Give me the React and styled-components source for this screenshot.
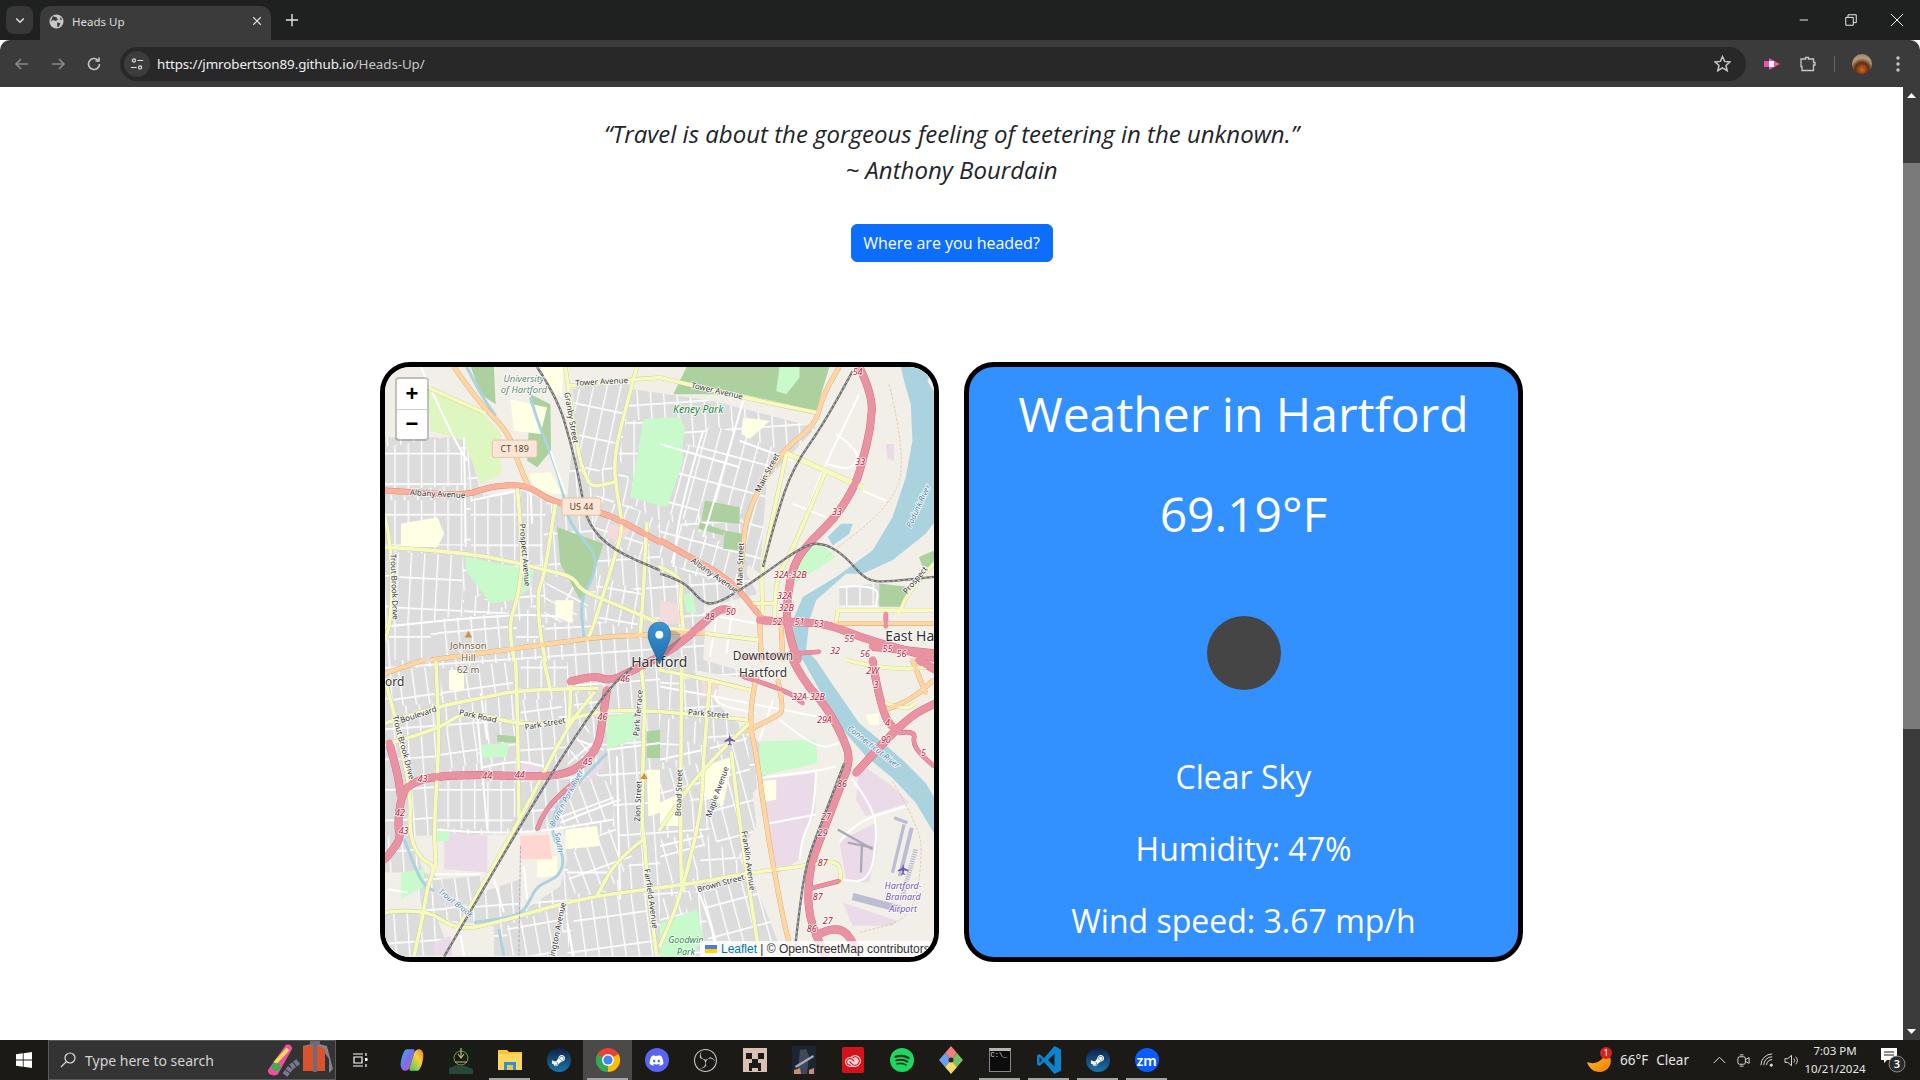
import React from "react"
import styled, { createGlobalStyle } from "styled-components"
import { FaDiscord, FaSteamSymbol } from "react-icons/fa"
import { SiObsstudio, SiAdobecreativecloud } from "react-icons/si"

const GlobalStyle = createGlobalStyle`
  html, body {
    margin: 0;
    height: 100%;
    overflow: hidden;
    background: #fff;
  }
  * { box-sizing: border-box; }
`

const UI_FONT = `"Noto Sans", "Open Sans", sans-serif`

/* ---------- browser chrome ---------- */

const Screen = styled.div`
  width: 1920px;
  height: 1080px;
  display: flex;
  flex-direction: column;
  font-family: "Open Sans", sans-serif;
`
const TabStrip = styled.div`
  height: 40px;
  background: #1f2020;
  display: flex;
  align-items: flex-end;
  padding-left: 6px;
  color: #e3e3e3;
  font-family: ${UI_FONT};
`
const TabSearch = styled.div`
  width: 27px;
  height: 28px;
  margin: 0 7px 6px 0;
  border-radius: 8px;
  background: #383838;
  display: flex;
  align-items: center;
  justify-content: center;
`
const Tab = styled.div`
  width: 231px;
  height: 34px;
  background: #3b3b3b;
  border-radius: 10px 10px 0 0;
  display: flex;
  align-items: center;
  padding: 0 8px 4px 9px;
  gap: 8px;
`
const TabTitle = styled.span`
  flex: 1;
  font-size: 11.5px;
  color: #dedede;
`
const NewTab = styled.div`
  width: 28px;
  height: 28px;
  margin: 0 0 6px 7px;
  display: flex;
  align-items: center;
  justify-content: center;
`
const WindowControls = styled.div`
  margin-left: auto;
  display: flex;
  align-self: stretch;
`
const WindowButton = styled.div`
  width: 46px;
  display: flex;
  align-items: center;
  justify-content: center;
`
const Toolbar = styled.div`
  height: 47px;
  background: #3b3b3b;
  display: flex;
  align-items: center;
  padding-left: 4px;
  border-radius: 10px 10px 0 0;
`
const NavButton = styled.div`
  width: 36px;
  height: 34px;
  display: flex;
  align-items: center;
  justify-content: center;
`
const Omnibox = styled.div`
  width: 1626px;
  height: 34px;
  margin-left: 8px;
  border-radius: 17px;
  background: #282828;
  display: flex;
  align-items: center;
  padding: 0 15px 0 4px;
`
const SiteInfo = styled.div`
  width: 26px;
  height: 26px;
  border-radius: 50%;
  background: #3c3c3c;
  display: flex;
  align-items: center;
  justify-content: center;
  margin-right: 7px;
`
const Url = styled.div`
  flex: 1;
  font-family: ${UI_FONT};
  font-size: 13.4px;
  letter-spacing: -0.1px;
  color: #c7c7c7;
  span { color: #f0f0f0; }
`
const ToolIcons = styled.div`
  display: flex;
  align-items: center;
  flex: 1;
  padding-left: 8px;
`
const ToolIcon = styled.div`
  width: ${p => p.$w || 36}px;
  display: flex;
  justify-content: center;
  align-items: center;
`
const ToolSep = styled.div`
  width: 1px;
  height: 16px;
  background: #666;
  margin: 0 9px 0 8px;
`
const Avatar = styled.div`
  width: 20px;
  height: 20px;
  border-radius: 50%;
  background: radial-gradient(circle at 50% 78%, #d8661c 0, #5e2d12 38%, #b79a7b 62%, #8c7a66 100%);
`

/* ---------- page ---------- */

const Viewport = styled.div`
  height: 953px;
  display: flex;
`
const Page = styled.main`
  flex: 1;
  background: #fff;
  display: flex;
  flex-direction: column;
  align-items: center;
  padding-top: 29px;
`
const Quote = styled.p`
  margin: 0;
  font-size: 24px;
  line-height: 36px;
  font-style: italic;
  font-weight: 400;
  color: #212529;
  text-align: center;
`
const HeadButton = styled.button`
  margin-top: 36px;
  width: 202px;
  height: 38px;
  background: #0d6efd;
  color: #fff;
  border: 1px solid #0d6efd;
  border-radius: 6px;
  font-family: "Open Sans", sans-serif;
  font-size: 16px;
`
const Cards = styled.section`
  margin-top: 100px;
  display: flex;
  gap: 25px;
`
const Card = styled.div`
  width: 559px;
  height: 600px;
  border: 5px solid #000;
  border-radius: 30px;
  overflow: hidden;
  position: relative;
`
const WeatherCard = styled(Card)`
  background: #3391ff;
  color: #fff;
  text-align: center;
  display: flex;
  flex-direction: column;
  align-items: center;
  padding-top: 11px;
`
const WeatherTitle = styled.div`
  font-size: 48px;
  line-height: 72px;
`
const WeatherTemp = styled.div`
  font-size: 48px;
  line-height: 72px;
  margin-top: 28px;
`
const WeatherIcon = styled.div`
  width: 74px;
  height: 74px;
  border-radius: 50%;
  background: #454545;
  margin-top: 66px;
`
const WeatherLine = styled.div`
  font-size: 32px;
  line-height: 48px;
  margin-top: ${p => p.$top}px;
`
const MapCanvas = styled.svg`
  display: block;
  width: 100%;
  height: 100%;
`
const MapLabel = styled.text`
  font-family: "Noto Sans", sans-serif;
  font-size: ${p => p.$size || 24}px;
  font-style: ${p => (p.$italic ? "italic" : "normal")};
  fill: ${p => p.$color || "#333"};
  stroke: ${p => (p.$nohalo ? "none" : "rgba(255,255,255,0.85)")};
  stroke-width: 5px;
  paint-order: stroke;
  text-anchor: ${p => p.$anchor || "middle"};
`
const ZoomControl = styled.div`
  position: absolute;
  left: 10px;
  top: 10px;
  width: 34px;
  height: 64px;
  border: 2px solid rgba(0, 0, 0, 0.2);
  border-radius: 4px;
  background: #fff;
  background-clip: padding-box;
  display: flex;
  flex-direction: column;
`
const ZoomButton = styled.div`
  flex: 1;
  display: flex;
  align-items: center;
  justify-content: center;
  font-family: "Liberation Sans", Arial, sans-serif;
  font-weight: 700;
  font-size: 22px;
  color: #000;
  & + & { border-top: 1px solid #ccc; }
`
const Attribution = styled.div`
  position: absolute;
  right: 0;
  bottom: 0;
  height: 16px;
  width: 234px;
  padding-left: 5px;
  background: rgba(255, 255, 255, 0.8);
  font-family: "Liberation Sans", Arial, sans-serif;
  font-size: 12px;
  line-height: 16px;
  color: #333;
  white-space: nowrap;
  display: flex;
  align-items: center;
  gap: 4px;
  a { color: #0078a8; text-decoration: none; }
`
const Scrollbar = styled.div`
  width: 17px;
  background: #3b3b3b;
  display: flex;
  flex-direction: column;
  align-items: center;
  justify-content: space-between;
  position: relative;
`
const ScrollArrow = styled.div`
  width: 17px;
  height: 17px;
  display: flex;
  align-items: center;
  justify-content: center;
`
const ScrollThumb = styled.div`
  position: absolute;
  top: 76px;
  left: 0;
  width: 17px;
  height: 566px;
  background: #7a7a7a;
`

/* ---------- taskbar ---------- */

const Taskbar = styled.footer`
  height: 40px;
  background: #1c1a17;
  display: flex;
  align-items: center;
  color: #fff;
  font-family: ${UI_FONT};
`
const StartButton = styled.div`
  width: 48px;
  display: flex;
  justify-content: center;
`
const SearchBox = styled.div`
  width: 288px;
  height: 40px;
  background: #333;
  border: 1px solid #5a5a5a;
  display: flex;
  align-items: center;
  padding-left: 11px;
  gap: 9px;
  font-size: 14px;
  color: #d4d4d4;
  margin-right: -1px;
`
const SearchText = styled.span`
  flex: 1;
  white-space: nowrap;
`
const TaskIcon = styled.div`
  width: 49px;
  height: 40px;
  display: flex;
  align-items: center;
  justify-content: center;
  position: relative;
  margin-right: ${p => p.$gap || 0}px;
  background: ${p => (p.$active ? "#4b4a48" : "transparent")};
  &::after {
    content: "";
    display: ${p => (p.$running ? "block" : "none")};
    position: absolute;
    left: 4px;
    right: 4px;
    bottom: 0;
    height: 2px;
    background: #a5a5a5;
  }
`
const RoundBadge = styled.div`
  width: 24px;
  height: 24px;
  border-radius: 50%;
  background: ${p => p.$bg};
  color: #fff;
  display: flex;
  align-items: center;
  justify-content: center;
  font-size: ${p => p.$font || 14}px;
  font-weight: 600;
`
const Tray = styled.div`
  margin-left: auto;
  display: flex;
  align-items: center;
  height: 40px;
`
const WeatherTray = styled.div`
  display: flex;
  align-items: center;
  font-size: 13.5px;
  color: #e6e6e6;
  margin-right: 18px;
  span { margin-left: 8px; }
  span:first-of-type { margin-left: 4px; }
`
const TrayIcon = styled.div`
  width: 24px;
  display: flex;
  justify-content: center;
`
const Clock = styled.div`
  width: 66px;
  margin: 0 6px 0 -1px;
  text-align: center;
  font-size: 11.5px;
  line-height: 18px;
  color: #e6e6e6;
`
const Notice = styled.div`
  width: 46px;
  padding-right: 8px;
  display: flex;
  justify-content: center;
`

/* ---------- map data: coordinates are 3x page px, origin at (380,360) ---------- */

const q2 = pts => pts.map(([x, y]) => [x + 840, y])
const q3 = pts => pts.map(([x, y]) => [x, y + 900])
const q4 = pts => pts.map(([x, y]) => [x + 840, y + 900])

const smooth = pts => {
  let d = `M${pts[0][0]} ${pts[0][1]}`
  for (let i = 1; i < pts.length - 1; i++) {
    const mx = (pts[i][0] + pts[i + 1][0]) / 2
    const my = (pts[i][1] + pts[i + 1][1]) / 2
    d += ` Q${pts[i][0]} ${pts[i][1]} ${mx} ${my}`
  }
  const last = pts[pts.length - 1]
  return d + ` L${last[0]} ${last[1]}`
}
const poly = pts => pts.map(p => p.join(",")).join(" ")

// grey street grid under nearly everything west of the river
const blanket = [
  [-4, [[12, 230], [260, 230], [300, 400], [560, 430], [590, 60], [1000, 120], [1310, 200], [1160, 360], [1100, 640], [1180, 780], [1130, 1000], [1160, 1250], [1040, 1400], [1200, 1790], [12, 1790]]],
]

// open ground and downtown, cut out of the blanket
const beige = [
  q2([[140, 740], [300, 700], [420, 760], [340, 960], [130, 900]]),
  q4([[100, 30], [340, 70], [440, 170], [300, 250], [170, 130]]),
  q3([[30, 530], [420, 525], [420, 660], [300, 700], [130, 640], [90, 530]]),
  q3([[12, 640], [90, 640], [130, 760], [12, 760]]),
  q3([[420, 520], [550, 500], [560, 600], [540, 680], [420, 760]]),
  q3([[170, 780], [340, 800], [340, 890], [210, 890]]),
  q4([[305, 620], [420, 600], [410, 893], [370, 893]]),
]

const blocks = [
  [0, [[12, 258], [215, 228], [255, 290], [262, 372], [12, 392]]],
  [0, [[12, 420], [250, 418], [250, 555], [12, 555]]],
  [3, [[40, 575], [245, 585], [245, 770], [25, 800]]],
  [3, [[250, 690], [385, 750], [385, 770], [250, 775]]],
  [0, [[270, 425], [410, 395], [415, 600], [270, 570]]],
  [0, [[420, 390], [500, 420], [480, 615], [420, 605]]],
  [12, [[575, 85], [765, 65], [705, 290], [615, 370]]],
  [18, [[650, 390], [840, 480], [790, 600], [640, 510]]],
  [-62, [[500, 640], [590, 670], [630, 730], [560, 790], [490, 770]]],
  [10, [[650, 640], [790, 700], [770, 810], [640, 780]]],
  [0, [[790, 175], [740, 180], [705, 330], [740, 420], [780, 430]]],
  [0, [[40, 790], [150, 790], [150, 900], [40, 900]]],
  [-5, [[170, 775], [385, 760], [385, 870], [170, 890]]],
  [0, [[410, 790], [470, 710], [480, 830], [405, 860]]],
  [-3, [[490, 790], [640, 780], [640, 830], [500, 850]]],
  [12, [[720, 300], [790, 440], [700, 430]]],
  ...[
    [15, [[80, 250], [310, 320], [270, 470], [40, 400]]],
    [15, [[150, 190], [370, 270], [310, 360], [110, 260]]],
    [15, [[250, 370], [320, 380], [300, 640], [250, 600]]],
    [15, [[0, 340], [130, 400], [110, 490], [0, 450]]],
    [15, [[0, 470], [110, 510], [90, 640], [0, 590]]],
    [15, [[110, 510], [240, 570], [240, 680], [80, 640]]],
    [0, [[540, 680], [660, 670], [660, 740], [540, 740]]],
  ].map(([a, p]) => [a, q2(p)]),
  ...[
    [-8, [[35, 30], [160, 20], [160, 130], [35, 140]]],
    [-8, [[180, 25], [390, 5], [400, 95], [180, 130]]],
    [0, [[420, 0], [560, 0], [570, 85], [420, 100]]],
    [-8, [[175, 215], [285, 190], [295, 310], [175, 335]]],
    [-8, [[300, 200], [400, 190], [410, 295], [300, 320]]],
    [-8, [[420, 120], [550, 120], [530, 190], [420, 180]]],
    [-8, [[580, 100], [660, 90], [650, 140], [580, 170]]],
    [-40, [[570, 250], [620, 190], [640, 260], [560, 330]]],
    [0, [[175, 365], [300, 360], [320, 510], [160, 505]]],
    [0, [[305, 370], [400, 360], [410, 460], [370, 525], [320, 520]]],
    [-20, [[540, 430], [640, 340], [700, 380], [700, 480], [530, 500]]],
    [-4, [[710, 290], [770, 280], [790, 500], [700, 490]]],
    [-20, [[560, 590], [700, 500], [760, 600], [690, 690], [640, 710], [570, 700]]],
    [-10, [[380, 800], [540, 740], [550, 820], [500, 890], [380, 890]]],
    [-8, [[590, 720], [790, 700], [830, 890], [560, 890]]],
    [-4, [[800, 350], [840, 350], [840, 450], [800, 450]]],
    [-4, [[800, 470], [840, 470], [840, 630], [810, 640]]],
    [-8, [[180, 660], [300, 650], [300, 720], [200, 760]]],
    [0, [[12, 270], [35, 270], [40, 480], [12, 560]]],
  ].map(([a, p]) => [a, q3(p)]),
  ...[
    [3, [[0, 30], [60, 40], [60, 150], [0, 150]]],
    [3, [[0, 180], [60, 175], [60, 300], [0, 310]]],
    [3, [[70, 175], [130, 190], [130, 260], [70, 240]]],
    [-15, [[150, 250], [260, 220], [290, 500], [230, 600], [150, 530]]],
    [-15, [[0, 540], [150, 510], [110, 640], [0, 690]]],
    [-15, [[130, 700], [280, 660], [360, 860], [150, 890]]],
    [-15, [[0, 720], [110, 690], [60, 790], [0, 830]]],
    [-15, [[0, 330], [125, 310], [125, 400], [0, 480]]],
  ].map(([a, p]) => [a, q4(p)]),
]

const fills = [
  ["#def6c0", [[140, 90], [300, 150], [362, 220], [362, 340], [300, 370], [250, 240], [150, 210]]],
  ["#add19e", [[450, 100], [510, 130], [512, 270], [470, 320], [440, 300]]],
  ["#add19e", [[530, 500], [670, 550], [640, 640], [600, 720], [540, 610]]],
  ["#add19e", [[270, 18], [340, 18], [345, 130], [300, 100]]],
  ["#c8facc", [[790, 175], [905, 170], [910, 300], [860, 440], [750, 410]]],
  ["#c8facc", [[255, 590], [460, 630], [450, 680], [400, 720], [330, 730], [255, 630]]],
  ["#ffffe5", [[60, 490], [170, 470], [190, 520], [170, 560], [60, 560]]],
  ["#ffffe5", [[390, 115], [500, 140], [480, 220], [400, 210]]],
  ["#ffffe5", [[445, 340], [510, 335], [545, 400], [470, 400]]],
  ["#ffffe5", [[480, 18], [550, 18], [545, 110], [510, 90]]],
  ["#ffffe5", [[525, 720], [580, 720], [575, 790], [525, 770]]],
  ["#f5dcdc", [[690, 490], [750, 510], [720, 545], [680, 530]]],
  ...[
    ["#add19e", [[80, 18], [510, 18], [470, 150], [250, 100], [40, 100]]],
    ["#c8facc", [[360, 18], [420, 18], [420, 50], [380, 100], [350, 90]]],
    ["#add19e", [[135, 420], [240, 440], [240, 490], [125, 480]]],
    ["#add19e", [[120, 485], [195, 510], [190, 525], [115, 505]]],
    ["#add19e", [[195, 510], [250, 520], [240, 570], [190, 565]]],
    ["#add19e", [[660, 670], [750, 680], [730, 740], [660, 740]]],
    ["#add19e", [[780, 590], [825, 570], [825, 620], [790, 620]]],
    ["#c8facc", [[0, 170], [60, 170], [75, 200], [60, 300], [15, 340], [0, 340]]],
    ["#c8facc", [[430, 560], [490, 555], [530, 590], [420, 660], [395, 680]]],
    ["#ebdbe8", [[680, 250], [705, 250], [705, 300], [685, 295]]],
    ["#f5dcdc", [[0, 720], [50, 730], [70, 790], [0, 790]]],
    ["#ffffe5", [[250, 170], [330, 180], [270, 235], [245, 220]]],
    ["#c8facc", [[70, 700], [100, 705], [110, 760], [80, 755]]],
  ].map(([c, p]) => [c, q2(p)]),
  ...[
    ["#c8facc", [[300, 255], [385, 250], [380, 290], [300, 295]]],
    ["#c8facc", [[60, 640], [130, 630], [130, 680], [60, 720]]],
    ["#c8facc", [[680, 170], [760, 160], [780, 235], [680, 270]]],
    ["#add19e", [[350, 225], [410, 230], [410, 250], [350, 245]]],
    ["#ebdbe8", [[190, 520], [320, 530], [320, 640], [190, 630]]],
    ["#ebdbe8", [[160, 850], [210, 830], [215, 890], [160, 890]]],
    ["#ffffe5", [[555, 510], [650, 500], [660, 560], [555, 570]]],
    ["#ffffe5", [[470, 590], [530, 590], [530, 650], [470, 655]]],
    ["#ffffe5", [[800, 330], [840, 330], [840, 460], [805, 470]]],
    ["#ffffe5", [[205, 30], [250, 30], [250, 90], [205, 90]]],
    ["#ffd6d1", [[420, 530], [505, 525], [515, 600], [420, 600]]],
    ["#add19e", [[800, 215], [840, 210], [840, 295], [800, 295]]],
    ["#c8facc", [[155, 515], [205, 515], [205, 545], [155, 545]]],
    ["#ebdbe8", [[620, 340], [670, 290], [670, 320], [630, 360]]],
    ["#ebdbe8", [[400, 300], [480, 320], [470, 350], [400, 340]]],
  ].map(([c, p]) => [c, q3(p)]),
  ...[
    ["#c8facc", [[300, 245], [470, 240], [475, 310], [300, 350]]],
    ["#c8facc", [[0, 795], [110, 750], [135, 850], [60, 893], [0, 893]]],
    ["#ebdbe8", [[305, 360], [470, 340], [468, 460], [430, 540], [420, 600], [360, 640], [340, 640]]],
    ["#ebdbe8", [[540, 545], [650, 490], [655, 560], [630, 670], [560, 665]]],
    ["#ebdbe8", [[600, 310], [700, 380], [750, 430], [620, 470], [590, 420]]],
    ["#ebdbe8", [[550, 730], [715, 785], [700, 800], [580, 800]]],
    ["#ffffe5", [[130, 320], [220, 290], [190, 440], [135, 410]]],
    ["#ffffe5", [[300, 365], [350, 360], [350, 420], [305, 430]]],
    ["#ffffe5", [[0, 430], [60, 400], [60, 500], [0, 500]]],
    ["#ffffe5", [[620, 165], [660, 160], [660, 195], [630, 195]]],
    ["#f5dcdc", [[130, 60], [180, 70], [170, 120], [120, 110]]],
  ].map(([c, p]) => [c, q4(p)]),
]

const river = [
  ...q2([[725, 18], [735, 60], [755, 130], [760, 240], [740, 350], [700, 470], [640, 570], [530, 650], [430, 710], [400, 780], [405, 900]]),
  ...q4([[430, 0], [480, 90], [550, 210], [620, 290], [700, 355], [770, 430], [830, 530], [830, 420], [800, 370], [730, 300], [660, 240], [600, 190], [510, 60], [470, 0]]),
  ...q2([[440, 870], [450, 780], [470, 720], [560, 640], [610, 640], [700, 600], [800, 520], [830, 480], [830, 100], [805, 60], [830, 18]]),
]

const streams = [
  [[258, 18], [300, 100], [345, 165]],
  [[450, 110], [470, 180], [520, 300], [550, 400], [565, 490], [650, 580], [640, 650], [600, 720], [610, 830]],
  q3([[680, 280], [620, 345], [530, 430], [510, 520], [552, 590], [540, 650], [470, 680], [450, 720], [420, 770], [280, 790]]),
  q3([[355, 810], [370, 890]]),
  q3([[70, 540], [100, 620], [130, 680], [160, 695]]),
]

const ROAD = {
  trunk: ["#e0806a", "#f9b29c", 16],
  primary: ["#d9a366", "#fcd6a4", 13],
  tertiary: ["#c9c98e", "#f7fabf", 11],
  wide: ["#c9c98e", "#f7fabf", 15],
  motor: ["#d6607c", "#e892a2", 22],
  ramp: ["#d6607c", "#e892a2", 12],
}

const roads = [
  ["tertiary", [[130, 75], [310, 155]]],
  ["tertiary", [[570, 75], [760, 55], [840, 50]]],
  ["tertiary", q2([[0, 50], [250, 110], [470, 155]])],
  ["tertiary", [[555, 18], [590, 270], [620, 360], [640, 380], [700, 365]]],
  ["tertiary", [[770, 18], [740, 130], [700, 290], [710, 400], [730, 500], [700, 600], [640, 800], [620, 840]]],
  ["tertiary", [[800, 490], [790, 700], [780, 830]]],
  ["tertiary", [[12, 560], [250, 575], [420, 610], [500, 630], [580, 650], [600, 690], [700, 730], [840, 790]]],
  ["tertiary", [[525, 430], [510, 530], [490, 650], [470, 700], [480, 830], [495, 900]]],
  ["tertiary", q3([[490, 0], [510, 90]])],
  ["tertiary", [[410, 380], [430, 590], [410, 720], [385, 790], [400, 900]]],
  ["tertiary", q3([[405, 0], [410, 100], [415, 470]])],
  ["tertiary", [[12, 470], [35, 570], [30, 780], [12, 840]]],
  ["tertiary", q3([[12, 60], [40, 160], [60, 260], [90, 400], [85, 530], [120, 600], [165, 620], [140, 680], [130, 750], [100, 890]])],
  ["tertiary", q3([[165, 0], [175, 200], [170, 340], [160, 500], [165, 620]])],
  ["tertiary", q3([[12, 190], [170, 140], [300, 115], [420, 90], [650, 85]])],
  ["tertiary", q3([[12, 255], [170, 210], [240, 160], [310, 165], [415, 195], [540, 190], [660, 150], [840, 155]])],
  ["tertiary", q4([[0, 155], [260, 180]])],
  ["tertiary", q3([[230, 810], [410, 500], [560, 200], [640, 100]])],
  ["tertiary", q3([[12, 760], [130, 745], [230, 815], [350, 790], [520, 740], [650, 710], [840, 685]])],
  ["tertiary", q4([[0, 685], [120, 670], [270, 640], [440, 620], [540, 600], [545, 670]])],
  ["tertiary", q3([[780, 0], [795, 100], [790, 250], [785, 500], [795, 550], [800, 660], [830, 890]])],
  ["tertiary", q3([[790, 540], [710, 600], [650, 710]])],
  ["tertiary", q3([[570, 60], [570, 170], [560, 200]])],
  ["tertiary", q4([[65, 0], [60, 640], [70, 690]])],
  ["tertiary", q4([[150, 70], [130, 300], [125, 460], [60, 720], [0, 860]])],
  ["tertiary", q4([[215, 280], [240, 500], [300, 893]])],
  ["tertiary", q4([[0, 30], [150, 60], [270, 90]])],
  ["tertiary", q4([[270, 190], [130, 320], [0, 510]])],
  ["wide", q2([[385, 280], [610, 380]])],
  ["tertiary", q2([[380, 280], [320, 560], [305, 640], [310, 760]])],
  ["tertiary", q2([[495, 340], [400, 570], [350, 650], [345, 770]])],
  ["tertiary", q2([[535, 750], [825, 750]])],
  ["tertiary", q2([[535, 750], [530, 800]])],
  ["tertiary", q2([[825, 610], [750, 690], [720, 760]])],
  ["tertiary", q2([[0, 620], [70, 650], [60, 710], [70, 800]])],
  ["tertiary", q2([[0, 800], [130, 820], [300, 840]])],
  ["tertiary", q2([[270, 730], [340, 730]])],
  ["tertiary", q4([[560, 0], [680, 30], [825, 20]])],
  ["tertiary", q4([[680, 130], [740, 150], [770, 130]])],
  ["primary", [[220, 18], [290, 120], [385, 215], [410, 300], [445, 380]]],
  ["primary", [[150, 900], [450, 860], [660, 830], [800, 825], [840, 820]]],
  ["primary", q2([[0, 815], [130, 820]])],
  ["primary", q3([[12, 40], [130, 0]])],
  ["primary", q2([[540, 18], [490, 100], [470, 190], [380, 260], [310, 360], [260, 470], [250, 560], [240, 680]])],
  ["primary", q4([[290, 50], [265, 170], [290, 280], [320, 500], [370, 780], [400, 893]])],
  ["primary", q4([[355, 60], [375, 150], [350, 170], [280, 205], [265, 215]])],
  ["primary", q2([[535, 790], [825, 790]])],
  ["primary", q2([[300, 780], [305, 900]])],
  ["primary", q2([[365, 800], [370, 900]])],
  ["primary", q4([[760, 0], [800, 100]])],
  ["primary", q4([[680, 150], [750, 125], [825, 60]])],
  ["trunk", [[12, 390], [100, 395], [255, 405], [320, 380], [400, 372], [450, 380], [500, 415], [550, 430], [660, 455], [720, 480], [840, 545]]],
  ["trunk", q2([[0, 540], [90, 590], [180, 640], [240, 690], [310, 780], [325, 785]])],
  ["motor", q2([[600, 18], [640, 100], [635, 200], [610, 300], [590, 370], [530, 470], [440, 555], [400, 620], [385, 700], [380, 780], [400, 860], [415, 900]])],
  ["motor", q4([[400, 0], [430, 60], [500, 140], [550, 230], [575, 300], [540, 390], [490, 520], [455, 610], [445, 700], [450, 770], [470, 830], [500, 893]])],
  ["motor", q4([[590, 340], [680, 240], [760, 165], [830, 130]])],
  ["motor", q2([[300, 780], [380, 785], [500, 790], [600, 830], [700, 860], [830, 895]])],
  ["motor", q2([[640, 860], [825, 880]])],
  ["motor", [[570, 965], [640, 945], [690, 965], [760, 930], [840, 890], [900, 850], [970, 790], [1020, 745], [1050, 750]]],
  ["motor", q3([[680, 90], [665, 200], [650, 270], [590, 330], [520, 350], [420, 350], [300, 345], [160, 350], [90, 370], [60, 410], [50, 500], [60, 540], [12, 600]])],
  ["motor", q3([[25, 250], [50, 340], [60, 410]])],
  ["ramp", q3([[470, 510], [490, 450], [590, 360]])],
  ["ramp", q2([[680, 760], [680, 800]])],
  ["motor", q4([[640, 0], [650, 70], [680, 180], [700, 200]])],
  ["ramp", q4([[250, 50], [380, 90], [430, 130]])],
  ["ramp", q2([[480, 875], [250, 893]])],
  ["ramp", q4([[445, 690], [540, 665]])],
  ["motor", q4([[470, 830], [540, 790], [600, 880]])],
  ["motor", q4([[780, 0], [830, 30]])],
  ["ramp", q4([[720, 220], [770, 210], [760, 260], [825, 320]])],
]

const streets = [
  [[250, 230], [255, 560]],
  [[270, 420], [410, 390]],
  [[510, 270], [555, 400]],
  [[450, 390], [455, 490]],
  [[12, 800], [385, 760], [555, 770]],
  [[120, 18], [215, 228], [260, 300]],
  ...[
    [[530, 220], [605, 270], [580, 330], [500, 310]],
    [[545, 215], [495, 310], [400, 570]],
    [[400, 430], [500, 470]],
    [[610, 390], [680, 420]],
    [[240, 240], [400, 300]],
    [[0, 250], [240, 320]],
    [[130, 210], [60, 440], [40, 620]],
    [[250, 120], [190, 330], [130, 530]],
    [[600, 100], [545, 215]],
    [[540, 680], [660, 670], [650, 740]],
    [[130, 760], [290, 790]],
    [[180, 720], [150, 890]],
    [[220, 730], [200, 880]],
  ].map(q2),
  ...[
    [[160, 510], [400, 530], [700, 480]],
    [[320, 240], [300, 100]],
    [[290, 165], [320, 510]],
    [[300, 325], [405, 300], [490, 320]],
    [[160, 645], [300, 645]],
    [[680, 270], [840, 250]],
    [[710, 290], [720, 720]],
    [[540, 490], [640, 450], [720, 420]],
    [[590, 240], [670, 270]],
    [[340, 660], [370, 760]],
    [[560, 640], [700, 640]],
    [[560, 790], [580, 890]],
    [[20, 690], [80, 700]],
    [[430, 620], [440, 720]],
    [[240, 830], [250, 890]],
  ].map(q3),
  ...[
    [[300, 355], [470, 335], [530, 320]],
    [[470, 335], [465, 460], [430, 530], [420, 600]],
    [[580, 360], [640, 440], [655, 530], [630, 670], [540, 660]],
    [[540, 550], [580, 490], [740, 440]],
    [[310, 495], [470, 465]],
    [[0, 80], [270, 130], [470, 170]],
    [[360, 180], [470, 270], [540, 250]],
    [[100, 660], [160, 800], [165, 893]],
    [[0, 300], [130, 270]],
    [[0, 560], [130, 530]],
    [[170, 90], [150, 130], [290, 160]],
    [[340, 120], [300, 240]],
  ].map(q4),
]

const rails = [
  [[470, 18], [530, 110], [570, 240], [600, 370], [620, 490], [700, 570], [840, 630]],
  q2([[0, 640], [70, 660], [130, 730], [170, 730], [240, 690], [300, 650], [440, 550], [500, 550], [560, 590], [620, 660], [680, 665], [825, 650]]),
  q2([[580, 30], [500, 180], [400, 320], [350, 470], [310, 620]]),
  q3([[190, 893], [400, 530], [570, 250], [690, 80], [760, 20]]),
  q4([[555, 310], [490, 480], [440, 610], [420, 750], [405, 880]]),
]

const RED = "#b8163a"
const BLUE = "#5588b8"
const GREEN = "#1d8a3c"
const BROWN = "#7a5c44"
const PURPLE = "#7154b4"

const at = (o, list) => list.map(l => ({ ...l, x: l.x + o[0], y: l.y + o[1] }))
const nums = (o, list) => at(o, list.map(([t, x, y]) => ({ t, x, y: y + 9, c: RED, i: true, s: 27 })))

const labels = [
  { t: "University", x: 430, y: 62, c: "#5f8a78", i: true, s: 28 },
  { t: "of Hartford", x: 430, y: 97, c: "#5f8a78", i: true, s: 28 },
  { t: "Tower Avenue", x: 665, y: 70, r: -3 },
  { t: "Granby Street", x: 565, y: 172, r: 80 },
  { t: "Albany Avenue", x: 170, y: 408, r: 3 },
  { t: "Prospect Avenue", x: 425, y: 585, r: 85 },
  { t: "Trout Brook Drive", x: 32, y: 680, r: 88 },
  { t: "Johnson", x: 263, y: 868, c: BROWN, s: 29 },
  { t: "Hill", x: 263, y: 903, c: BROWN, s: 29 },
  { t: "62 m", x: 263, y: 938, c: BROWN, s: 29 },
  ...at([840, 0], [
    { t: "Tower Avenue", x: 170, y: 98, r: 13 },
    { t: "Keney Park", x: 115, y: 155, c: GREEN, i: true, s: 31 },
    { t: "Main Street", x: 330, y: 340, r: -62 },
    { t: "Main Street", x: 250, y: 612, r: -88 },
    { t: "Albany Avenue", x: 160, y: 652, r: 35 },
    { t: "Podunk River", x: 785, y: 440, r: -65, c: BLUE, i: true, s: 24 },
    { t: "Prospect", x: 775, y: 665, r: -50 },
    { t: "Downtown", x: 310, y: 900, s: 36 },
    { t: "East Ha", x: 678, y: 842, s: 42, a: "start" },
  ]),
  { t: "Hartford", x: 838, y: 920, s: 42 },
  { t: "Hartford", x: 1150, y: 950, s: 36 },
  ...nums([840, 0], [
    ["33", 603, 305], ["33", 533, 455], ["32A-32B", 392, 645], ["32A", 375, 708], ["32B", 380, 742],
    ["50", 213, 757], ["48", 150, 770], ["52", 353, 787], ["51", 420, 787], ["53", 478, 792],
    ["55", 570, 838], ["32", 527, 872], ["56", 617, 883], ["55", 685, 868], ["56", 727, 882], ["54", 595, 34],
  ]),
  ...at([0, 900], [
    { t: "ord", x: 12, y: 78, s: 36, a: "start" },
    { t: "Boulevard", x: 115, y: 172, r: -18 },
    { t: "Trout Brook Drive", x: 60, y: 265, r: 75 },
    { t: "Park Road", x: 290, y: 177, r: 12 },
    { t: "Park Street", x: 495, y: 200, r: -10 },
    { t: "Park Terrace", x: 782, y: 160, r: -85 },
    { t: "Branch Park River", x: 565, y: 420, r: -62, c: BLUE, i: true },
    { t: "South", x: 528, y: 550, r: 80, c: BLUE, i: true },
    { t: "Zion Street", x: 782, y: 425, r: -88 },
    { t: "Fairfield Avenue", x: 805, y: 720, r: 82 },
    { t: "Trout Brook", x: 220, y: 738, r: 38, c: BLUE, i: true },
    { t: "ington Avenue", x: 540, y: 812, r: -78 },
  ]),
  ...nums([0, 900], [
    ["46", 735, 57], ["46", 667, 172], ["45", 622, 308], ["44", 320, 350], ["44", 418, 345],
    ["43", 125, 358], ["42", 57, 460], ["43", 68, 515],
  ]),
  ...at([840, 900], [
    { t: "Park Street", x: 145, y: 170, r: 5 },
    { t: "Broad Street", x: 65, y: 400, r: -88 },
    { t: "Maple Avenue", x: 180, y: 400, r: -70 },
    { t: "Franklin Avenue", x: 258, y: 605, r: 82 },
    { t: "Brown Street", x: 185, y: 680, r: -15 },
    { t: "Connecticut River", x: 638, y: 268, r: 38, c: BLUE, i: true, s: 25 },
    { t: "Hartford-", x: 732, y: 688, c: PURPLE, i: true, s: 27 },
    { t: "Brainard", x: 732, y: 723, c: PURPLE, i: true, s: 27 },
    { t: "Airport", x: 732, y: 758, c: PURPLE, i: true, s: 27 },
    { t: "Goodwin", x: 78, y: 852, c: GREEN, i: true, s: 27 },
    { t: "Park", x: 78, y: 888, c: GREEN, i: true, s: 27 },
  ]),
  ...nums([840, 900], [
    ["32A-32B", 447, 110], ["29A", 495, 180], ["86", 548, 372], ["27", 500, 472], ["29", 490, 520],
    ["87", 490, 610], ["87", 475, 713], ["27", 505, 785], ["86", 457, 810], ["2W", 640, 33],
    ["3", 650, 75], ["4", 685, 190], ["90", 680, 240], ["5", 793, 280],
  ]),
]

const PLANE = "M0-17 L3-5 L16 3 V7 L3 3 L2 11 L6 15 V17 L0 15 L-6 17 V15 L-2 11 L-3 3 L-16 7 V3 L-3-5 Z"

const angles = [...new Set([...blanket, ...blocks].map(b => b[0]))]

const Shield = ({ x, y, w, text }) => (
  <g>
    <rect x={x} y={y} width={w} height="52" rx="6" fill="#fbe6d6" stroke="#e3c3a8" strokeWidth="3" />
    <MapLabel x={x + w / 2} y={y + 37} $size={27} $color="#5b4331" $nohalo>{text}</MapLabel>
  </g>
)

const HartfordMap = () => (
  <MapCanvas viewBox="12 18 1653 1776" preserveAspectRatio="none">
    <defs>
      {angles.map(a => (
        <pattern
          key={a}
          id={`blk${a}`}
          width="40"
          height="92"
          patternUnits="userSpaceOnUse"
          patternTransform={`rotate(${a})`}
        >
          <rect width="40" height="92" fill="#dcdcdc" />
          <rect width="4" height="92" fill="#fff" />
          <rect width="40" height="5" fill="#fff" />
        </pattern>
      ))}
      <linearGradient id="pin" x1="0" y1="0" x2="0" y2="1">
        <stop offset="0" stopColor="#3a94d6" />
        <stop offset="1" stopColor="#1f6da8" />
      </linearGradient>
    </defs>
    <rect x="0" y="0" width="1700" height="1800" fill="#f2efe9" />
    {blanket.map(([a, p], i) => (
      <polygon key={i} points={poly(p)} fill={`url(#blk${a})`} />
    ))}
    {beige.map((p, i) => (
      <polygon key={i} points={poly(p)} fill="#f2efe9" />
    ))}
    {blocks.map(([a, p], i) => (
      <polygon key={i} points={poly(p)} fill={`url(#blk${a})`} />
    ))}
    {fills.map(([c, p], i) => (
      <polygon key={i} points={poly(p)} fill={c} />
    ))}
    <polygon points={poly(river)} fill="#aad3df" />
    <polygon points={poly(q2([[505, 530], [545, 490], [580, 490], [570, 520], [520, 555]]))} fill="#aad3df" />
    {streams.map((s, i) => (
      <path key={i} d={smooth(s)} fill="none" stroke="#aad3df" strokeWidth="9" />
    ))}
    {streets.map((s, i) => (
      <path key={i} d={smooth(s)} fill="none" stroke="#fff" strokeWidth="6" />
    ))}
    {/* airport */}
    <path d={smooth(q4([[700, 365], [780, 500], [790, 600], [760, 780], [600, 820]]))} fill="none" stroke="#d8b98e" strokeWidth="2" strokeDasharray="8 5" />
    <path d={smooth(q2([[690, 70], [745, 300], [690, 440], [500, 590]]))} fill="none" stroke="#d8b98e" strokeWidth="2" strokeDasharray="8 5" />
    <g fill="none" stroke="#bcbcd2">
      <path d={smooth(q4([[705, 475], [745, 490]]))} strokeWidth="10" />
      <path d={smooth(q4([[735, 495], [700, 640]]))} strokeWidth="10" />
      <path d={smooth(q4([[758, 505], [722, 650]]))} strokeWidth="12" />
      <path d={smooth(q4([[770, 570], [730, 710]]))} strokeWidth="14" strokeDasharray="4 3" />
      <path d={smooth(q4([[580, 712], [725, 750]]))} strokeWidth="22" />
    </g>
    <g fill="none" stroke="#a9a9b5" strokeWidth="7">
      <path d={smooth(q4([[535, 510], [640, 570]]))} />
      <path d={smooth(q4([[608, 555], [605, 640]]))} />
      <path d={smooth(q4([[565, 550], [640, 565]]))} />
    </g>
    {roads.map(([k, p], i) => (
      <path key={`c${i}`} d={smooth(p)} fill="none" stroke={ROAD[k][0]} strokeWidth={ROAD[k][2] + 2} />
    ))}
    {roads.map(([k, p], i) => (
      <path key={`r${i}`} d={smooth(p)} fill="none" stroke={ROAD[k][1]} strokeWidth={ROAD[k][2]} strokeLinecap="round" />
    ))}
    {rails.map((p, i) => (
      <g key={i} fill="none">
        <path d={smooth(p)} stroke="#707070" strokeWidth="7" />
        <path d={smooth(p)} stroke="#e8e8e8" strokeWidth="2" strokeDasharray="8 8" />
      </g>
    ))}
    <path d={smooth(q3([[420, 560], [415, 890]]))} fill="none" stroke="#b9a9c0" strokeWidth="3" strokeDasharray="10 4" />
    <path d="M252 832 L263 812 L274 832 Z" fill="#c99343" />
    <path d="M781 1258 L792 1240 L803 1258 Z" fill="#c99343" />
    <rect x="978" y="760" width="20" height="20" fill="#6f8fbc" />
    <path d={PLANE} transform="translate(1050 1140)" fill={PURPLE} />
    <path d={PLANE} transform="translate(1572 1530)" fill={PURPLE} />
    <Shield x={335} y={238} w={135} text="CT 189" />
    <Shield x={545} y={412} w={117} text="US 44" />
    {labels.map((l, i) => (
      <MapLabel
        key={i}
        x={l.x}
        y={l.y}
        $size={l.s}
        $color={l.c}
        $italic={l.i}
        $anchor={l.a}
        transform={l.r ? `rotate(${l.r} ${l.x} ${l.y})` : undefined}
      >
        {l.t}
      </MapLabel>
    ))}
    {/* marker */}
    <path d="M838 912 L900 840 C 915 820 880 806 860 812 Z" fill="rgba(0,0,0,0.18)" />
    <path
      d="M838 786 C 804 786 802 822 806 838 C 812 860 830 890 838 912 C 846 890 864 860 870 838 C 874 822 872 786 838 786 Z"
      fill="url(#pin)"
      stroke="#1f6596"
      strokeWidth="2"
    />
    <circle cx="838" cy="824" r="12" fill="#fff" />
  </MapCanvas>
)

/* ---------- small icons ---------- */

const Stroke = ({ size = 16, w = 1.6, color = "#e3e3e3", children }) => (
  <svg width={size} height={size} viewBox="0 0 16 16" fill="none" stroke={color} strokeWidth={w}>
    {children}
  </svg>
)
const Dim = "#8a8a8a"

const GlobeIcon = () => (
  <svg width="15" height="15" viewBox="0 0 16 16">
    <circle cx="8" cy="8" r="7.5" fill="#c4c7c5" />
    <path d="M4 2.5 L8 3.5 L9.5 6 L7 7.5 L4.5 6.5 L2 8 Z M8.5 9 L12 9.5 L11 13 L9 14 Z M12 3 L14 6 L12 6.5 Z" fill="#3b3b3b" />
  </svg>
)
const WindowsLogo = () => (
  <svg width="16" height="16" viewBox="0 0 16 16" fill="#fff">
    <path d="M0 2.3 L6.8 1.3 V7.5 H0 Z M7.6 1.2 L16 0 V7.5 H7.6 Z M0 8.4 H6.8 V14.7 L0 13.7 Z M7.6 8.4 H16 V16 L7.6 14.8 Z" />
  </svg>
)
const ChromeIcon = () => (
  <svg width="24" height="24" viewBox="0 0 24 24">
    <circle cx="12" cy="12" r="12" fill="#ea4335" />
    <path d="M12 12 L22.4 6 A12 12 0 0 1 12 24 Z" fill="#fbbc04" />
    <path d="M12 12 L12 24 A12 12 0 0 1 1.6 6 Z" fill="#34a853" />
    <circle cx="12" cy="12" r="6" fill="#fff" />
    <circle cx="12" cy="12" r="4.6" fill="#4285f4" />
  </svg>
)
const CopilotIcon = () => (
  <svg width="24" height="26" viewBox="0 0 24 24" preserveAspectRatio="none">
    <defs>
      <linearGradient id="cop1" x1="0" y1="0" x2="1" y2="1">
        <stop offset="0" stopColor="#2fb8f0" />
        <stop offset="0.5" stopColor="#7a6cf0" />
        <stop offset="1" stopColor="#f0509a" />
      </linearGradient>
      <linearGradient id="cop2" x1="0" y1="1" x2="1" y2="0">
        <stop offset="0" stopColor="#3cc864" />
        <stop offset="0.6" stopColor="#f5d13c" />
        <stop offset="1" stopColor="#f07a30" />
      </linearGradient>
    </defs>
    <path d="M7 2 H13 C15 2 15 4 14 6 L10 18 C9 21 7 22 5 22 C1 22 0 17 1 13 C2 8 4 2 7 2 Z" fill="url(#cop1)" />
    <path d="M17 22 H11 C9 22 9 20 10 18 L14 6 C15 3 17 2 19 2 C23 2 24 7 23 11 C22 16 20 22 17 22 Z" fill="url(#cop2)" />
  </svg>
)
const EldenIcon = () => (
  <svg width="24" height="28" viewBox="0 0 24 28">
    <rect width="24" height="28" fill="#122018" />
    <circle cx="12" cy="12" r="7" fill="none" stroke="#9b8a4a" strokeWidth="1" />
    <path d="M12 2 V12 M9 8 L12 12 L15 8 M6 16 H18" stroke="#c9b468" strokeWidth="1.2" fill="none" />
    <path d="M0 28 V22 L8 19 L16 20 L24 23 V28 Z" fill="#28463a" />
  </svg>
)
const FolderIcon = () => (
  <svg width="24" height="22" viewBox="0 0 24 22">
    <path d="M0 1 H9 L11 3 H24 V21 H0 Z" fill="#f8c537" />
    <rect y="5" width="24" height="16" fill="#fbd75b" />
    <path d="M6 21 V13 H18 V21 H15 V16 H9 V21 Z" fill="#2f8fe0" />
    <rect x="9" y="16" width="6" height="5" fill="#f8c537" />
  </svg>
)
const SteamIcon = () => (
  <RoundBadge $bg="linear-gradient(180deg,#10204a,#1876a8)">
    <FaSteamSymbol size={15} />
  </RoundBadge>
)
const CreeperIcon = () => (
  <svg width="24" height="24" viewBox="0 0 8 8" shapeRendering="crispEdges">
    <rect width="8" height="8" fill="#d9c0b2" />
    <path d="M1 1.5 H3 V3.5 H1 Z M5 1.5 H7 V3.5 H5 Z M3 3.5 H5 V5 H6 V7.5 H5 V6.8 H3 V7.5 H2 V5 H3 Z" fill="#1a1a1a" />
  </svg>
)
const PortraitIcon = () => (
  <svg width="24" height="28" viewBox="0 0 24 28">
    <rect width="24" height="28" fill="#1d2532" />
    <path d="M8 4 L14 3 L17 10 L15 28 H5 L7 14 Z" fill="#3c4a5c" />
    <path d="M3 20 L21 9 L22 11 L4 22 Z" fill="#a7aeb8" />
    <path d="M2 24 L8 22 L9 28 H2 Z M17 24 L22 22 V28 H17 Z" fill="#c98e6c" />
  </svg>
)
const AdobeIcon = () => (
  <svg width="22" height="26" viewBox="0 0 22 26">
    <rect width="22" height="26" rx="2" fill="#d4121c" />
    <foreignObject x="3" y="5" width="16" height="16">
      <SiAdobecreativecloud size={16} color="#fbd4d4" />
    </foreignObject>
  </svg>
)
const SpotifyIcon = () => (
  <svg width="24" height="24" viewBox="0 0 24 24">
    <circle cx="12" cy="12" r="12" fill="#1ed760" />
    <g fill="none" stroke="#10351f" strokeLinecap="round">
      <path d="M5.5 8.8 C10 7.4 15 7.8 18.6 10" strokeWidth="2.2" />
      <path d="M6.3 12.4 C10 11.4 14.4 11.8 17.4 13.6" strokeWidth="1.9" />
      <path d="M7 15.8 C10 15 13.4 15.4 16 16.9" strokeWidth="1.6" />
    </g>
  </svg>
)
const KrakenIcon = () => (
  <svg width="24" height="28" viewBox="0 0 24 28">
    <path d="M12 0 L18 7 L12 14 L6 7 Z" fill="#f08080" />
    <path d="M0 14 L6 7 L12 14 L6 21 Z" fill="#6aa0f0" />
    <path d="M12 14 L18 7 L24 14 L18 21 Z" fill="#7ac060" />
    <path d="M12 14 L18 21 L12 28 L6 21 Z" fill="#f5d86a" />
    <circle cx="12" cy="14" r="2.5" fill="#2a2a2a" />
  </svg>
)
const CmdIconBox = styled.div`
  width: 22px;
  height: 24px;
  background: #0c0c0c;
  border: 1px solid #888;
  border-top: 3px solid #b5b5b5;
  color: #ddd;
  font-family: "Liberation Mono", monospace;
  font-size: 7px;
  line-height: 9px;
  padding-left: 1px;
`
const VSCodeIcon = () => (
  <svg width="24" height="28" viewBox="0 0 24 24" preserveAspectRatio="none">
    <path d="M17.5 0 L24 3 V21 L17.5 24 L7 13.8 L2.6 17.2 L0 15.9 V8.1 L2.6 6.8 L7 10.2 Z M17.5 6.5 L11 12 L17.5 17.5 Z M2.6 9.5 V14.5 L5 12 Z" fill="#0a84d0" />
  </svg>
)
const ZoomIcon = () => (
  <RoundBadge $bg="#0b5cff" $font={14}>zm</RoundBadge>
)
const ScooterDecor = () => (
  <svg width="70" height="38" viewBox="0 0 66 38">
    <path d="M1 29 L18 5 C20 2 26 4 25 8 L11 33 C8 36 0 34 1 29 Z" fill="#ef4fa0" />
    <path d="M8 22 L21 8" stroke="#f5e050" strokeWidth="4" />
    <circle cx="9" cy="26" r="4" fill="#2fb34f" />
    <path d="M18 34 L24 26 L32 20" stroke="#7a7890" strokeWidth="6" strokeDasharray="4 1" fill="none" />
    <path d="M36 5 L48 2 L60 5 L66 28 L62 32 V18 L58 12 V30 H36 Z" fill="#86828f" />
    <path d="M36 6 L46 4 V30 H36 Z M50 4 L58 8 V30 H50 Z" fill="#d9532c" />
    <rect x="46" y="3" width="4" height="28" fill="#6e6a78" />
    <rect x="43" y="0" width="10" height="4" fill="#6e6a78" />
  </svg>
)
const MoonIcon = () => (
  <svg width="30" height="30" viewBox="0 0 30 30">
    <defs>
      <linearGradient id="moon" x1="0" y1="0" x2="1" y2="1">
        <stop offset="0" stopColor="#fbc02d" />
        <stop offset="1" stopColor="#f57c00" />
      </linearGradient>
    </defs>
    <path d="M1 17 C8 20 16 17 20 8 C28 12 26 26 14 27 C7 27 3 23 1 17 Z" fill="url(#moon)" />
    <circle cx="20" cy="8" r="6" fill="#d42222" />
    <text x="20" y="11" fontSize="9" fontFamily="Noto Sans, sans-serif" fill="#fff" textAnchor="middle">1</text>
  </svg>
)
const NotifyIcon = () => (
  <svg width="28" height="28" viewBox="0 0 28 28">
    <path d="M2 2 H18 V14 H8 L5 17 V14 H2 Z" fill="#fff" />
    <path d="M5 6 H15 M5 9 H15" stroke="#1c1a17" strokeWidth="1" />
    <circle cx="18" cy="18" r="8" fill="#2b2b2b" stroke="#8a8a8a" />
    <text x="18" y="22" fontSize="11" fontWeight="600" fontFamily="Noto Sans, sans-serif" fill="#fff" textAnchor="middle">3</text>
  </svg>
)

const taskIcons = [
  { key: "task", gap: 3, icon: (
    <Stroke size={16} w={1.2} color="#fff">
      <path d="M1 2 H11 M1 14 H11 M2 5 H10 V11 H2 Z M14 1 V4 M14 12 V15" />
      <rect x="13" y="6" width="2.5" height="3" fill="#fff" stroke="none" />
    </Stroke>
  ) },
  { key: "copilot", icon: <CopilotIcon /> },
  { key: "elden", icon: <EldenIcon /> },
  { key: "files", running: true, icon: <FolderIcon /> },
  { key: "steam", icon: <SteamIcon /> },
  { key: "chrome", active: true, running: true, icon: <ChromeIcon /> },
  { key: "discord", icon: <RoundBadge $bg="#5865f2"><FaDiscord size={15} /></RoundBadge> },
  { key: "obs", icon: <SiObsstudio size={23} color="#c8c8c8" /> },
  { key: "creeper", icon: <CreeperIcon /> },
  { key: "portrait", icon: <PortraitIcon /> },
  { key: "adobe", icon: <AdobeIcon /> },
  { key: "spotify", icon: <SpotifyIcon /> },
  { key: "kraken", icon: <KrakenIcon /> },
  { key: "cmd", running: true, icon: <CmdIconBox>C:\_</CmdIconBox> },
  { key: "vscode", running: true, icon: <VSCodeIcon /> },
  { key: "steam2", running: true, icon: <SteamIcon /> },
  { key: "zoom", running: true, icon: <ZoomIcon /> },
]

export default function App() {
  return (
    <Screen>
      <GlobalStyle />
      <TabStrip>
        <TabSearch>
          <Stroke size={12} w={2}><path d="M3 6 L8 11 L13 6" /></Stroke>
        </TabSearch>
        <Tab>
          <GlobeIcon />
          <TabTitle>Heads Up</TabTitle>
          <Stroke size={12} w={1.6}><path d="M3 3 L13 13 M13 3 L3 13" /></Stroke>
        </Tab>
        <NewTab>
          <Stroke size={14} w={1.6}><path d="M8 1 V15 M1 8 H15" /></Stroke>
        </NewTab>
        <WindowControls>
          <WindowButton><Stroke size={12} w={1.2} color="#fff"><path d="M1 8 H12" /></Stroke></WindowButton>
          <WindowButton>
            <Stroke size={12} w={1.2} color="#fff"><path d="M1 4.5 H11 V15 H1 Z M4 4.5 V1 H15 V11.5 H11" /></Stroke>
          </WindowButton>
          <WindowButton><Stroke size={14} w={1.1} color="#fff"><path d="M1 1 L15 15 M15 1 L1 15" /></Stroke></WindowButton>
        </WindowControls>
      </TabStrip>
      <Toolbar>
        <NavButton>
          <Stroke color={Dim}><path d="M14 8 H2 M7 3 L2 8 L7 13" /></Stroke>
        </NavButton>
        <NavButton>
          <Stroke color={Dim}><path d="M2 8 H14 M9 3 L14 8 L9 13" /></Stroke>
        </NavButton>
        <NavButton>
          <Stroke color="#c7c7c7"><path d="M13.5 8 A5.5 5.5 0 1 1 11.8 4 M13 1.5 V5 H9.5" /></Stroke>
        </NavButton>
        <Omnibox>
          <SiteInfo>
            <Stroke size={14} w={1.3} color="#e3e3e3">
              <circle cx="4.5" cy="4" r="1.8" />
              <path d="M8.5 4 H15 M1 12 H7.5" />
              <circle cx="11.5" cy="12" r="1.8" />
            </Stroke>
          </SiteInfo>
          <Url><span>https://jmrobertson89.github.io</span>/Heads-Up/</Url>
          <Stroke size={17} w={1.4} color="#c7c7c7">
            <path d="M8 1.5 L10 6 L15 6.5 L11.3 9.8 L12.4 14.8 L8 12.2 L3.6 14.8 L4.7 9.8 L1 6.5 L6 6 Z" />
          </Stroke>
        </Omnibox>
        <ToolIcons>
          <ToolIcon>
            <svg width="16" height="12" viewBox="0 0 16 12">
              <path d="M0 3 H5 V0 L16 6 L5 12 V9 H0 Z" fill="#f04fb0" />
              <rect x="5" y="3" width="5" height="6" fill="#fff" />
            </svg>
          </ToolIcon>
          <ToolIcon>
            <Stroke size={16} w={1.3} color="#c7c7c7">
              <path d="M1 3 H5.5 V1.5 H8.5 V3 H13.5 V6.5 H15 V9 H13.5 V14.5 H2 V10.5 H1 Z" />
            </Stroke>
          </ToolIcon>
          <ToolSep />
          <ToolIcon $w={36}><Avatar /></ToolIcon>
          <ToolIcon $w={36}>
            <svg width="4" height="16" viewBox="0 0 4 16" fill="#c7c7c7">
              <circle cx="2" cy="2" r="1.7" />
              <circle cx="2" cy="8" r="1.7" />
              <circle cx="2" cy="14" r="1.7" />
            </svg>
          </ToolIcon>
        </ToolIcons>
      </Toolbar>
      <Viewport>
        <Page>
          <Quote>
            “Travel is about the gorgeous feeling of teetering in the unknown.”
            <br />~ Anthony Bourdain
          </Quote>
          <HeadButton>Where are you headed?</HeadButton>
          <Cards>
            <Card>
              <HartfordMap />
              <ZoomControl>
                <ZoomButton>+</ZoomButton>
                <ZoomButton>−</ZoomButton>
              </ZoomControl>
              <Attribution>
                <svg width="12" height="8" viewBox="0 0 12 8">
                  <rect width="12" height="4" fill="#4c7be1" />
                  <rect y="4" width="12" height="4" fill="#ffd500" />
                </svg>
                <span><a>Leaflet</a> | © OpenStreetMap contributors</span>
              </Attribution>
            </Card>
            <WeatherCard>
              <WeatherTitle>Weather in Hartford</WeatherTitle>
              <WeatherTemp>69.19°F</WeatherTemp>
              <WeatherIcon />
              <WeatherLine $top={63}>Clear Sky</WeatherLine>
              <WeatherLine $top={24}>Humidity: 47%</WeatherLine>
              <WeatherLine $top={24}>Wind speed: 3.67 mp/h</WeatherLine>
            </WeatherCard>
          </Cards>
        </Page>
        <Scrollbar>
          <ScrollArrow>
            <svg width="9" height="5" viewBox="0 0 9 5"><path d="M0 5 L4.5 0 L9 5 Z" fill="#fff" /></svg>
          </ScrollArrow>
          <ScrollThumb />
          <ScrollArrow>
            <svg width="9" height="5" viewBox="0 0 9 5"><path d="M0 0 L4.5 5 L9 0 Z" fill="#fff" /></svg>
          </ScrollArrow>
        </Scrollbar>
      </Viewport>
      <Taskbar>
        <StartButton><WindowsLogo /></StartButton>
        <SearchBox>
          <Stroke size={16} w={1.2} color="#e0e0e0">
            <circle cx="10" cy="6" r="5" />
            <path d="M6.3 9.7 L1 15" />
          </Stroke>
          <SearchText>Type here to search</SearchText>
          <ScooterDecor />
        </SearchBox>
        {taskIcons.map(t => (
          <TaskIcon key={t.key} $gap={t.gap} $active={t.active} $running={t.running}>
            {t.icon}
          </TaskIcon>
        ))}
        <Tray>
          <WeatherTray>
            <MoonIcon />
            <span>66°F</span>
            <span>Clear</span>
          </WeatherTray>
          <TrayIcon>
            <Stroke size={13} w={1.2}><path d="M1 11 L8 4 L15 11" /></Stroke>
          </TrayIcon>
          <TrayIcon>
            <Stroke size={15} w={1}>
              <rect x="2" y="4" width="8" height="8" rx="2" />
              <path d="M10 7 L14 5 V11 L10 9 M4 2 H8 M4 14 H8" />
            </Stroke>
          </TrayIcon>
          <TrayIcon>
            <Stroke size={15} w={1}>
              <path d="M1 13 A12 12 0 0 1 13 1 M4 13 A9 9 0 0 1 13 4 M7 13 A6 6 0 0 1 13 7" />
              <circle cx="12" cy="13" r="1.2" fill="#e3e3e3" />
            </Stroke>
          </TrayIcon>
          <TrayIcon>
            <Stroke size={15} w={1}>
              <path d="M1 6 H4 L8 2.5 V13.5 L4 10 H1 Z M10.5 6 A3 3 0 0 1 10.5 10 M12.5 4 A6 6 0 0 1 12.5 12" />
            </Stroke>
          </TrayIcon>
          <Clock>7:03 PM<br />10/21/2024</Clock>
          <Notice><NotifyIcon /></Notice>
        </Tray>
      </Taskbar>
    </Screen>
  )
}
